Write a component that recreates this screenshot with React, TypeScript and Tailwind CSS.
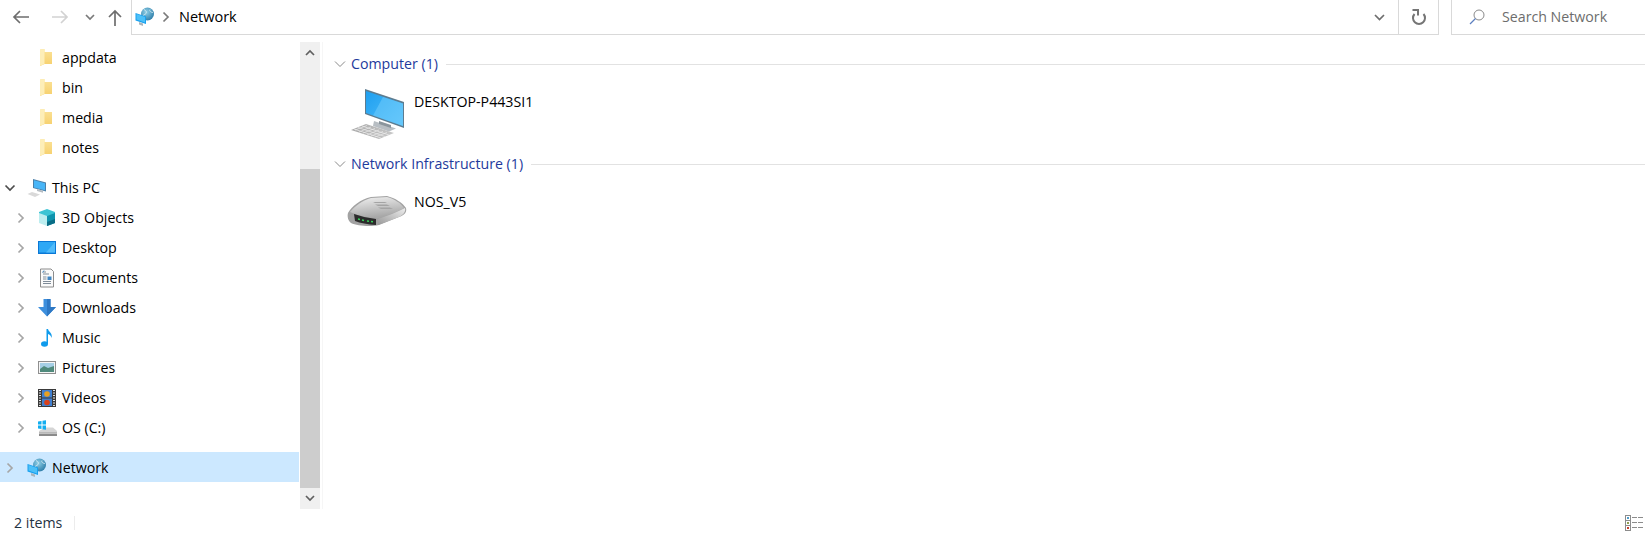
import type { ReactNode } from "react";

function Chevron({ open, color = "#a6a6a6" }: { open?: boolean; color?: string }) {
	return (
		<svg width="14" height="14" viewBox="0 0 14 14" fill="none" stroke={color} strokeWidth="1.7">
			{open ? <path d="M2.5 4.5 7 9l4.5-4.5" /> : <path d="M4.5 2.5 9 7l-4.5 4.5" />}
		</svg>
	);
}

function FolderIcon() {
	return (
		<svg width="20" height="20" viewBox="0 0 20 20">
			<defs>
				<linearGradient id="fold" x1="0" y1="0" x2="0" y2="1">
					<stop offset="0" stopColor="#fbe39a" />
					<stop offset="1" stopColor="#f6cf6b" />
				</linearGradient>
			</defs>
			<path d="M3 1.500 7.500 1v3H15v12H7.500l-4.500 2z" fill="url(#fold)" />
			<path d="M3 1.500 7.500 1v15l-4.500 2z" fill="#fdeeb8" />
		</svg>
	);
}

function CubeIcon() {
	return (
		<svg width="20" height="20" viewBox="0 0 20 20">
			<path d="M10 1l8 3v5l-8 3-8-3V4z" fill="#3cc4d4" />
			<path d="M2 5l8 3v10l-8-3z" fill="#bdeef0" />
			<path d="M18 5l-8 3v10l8-3z" fill="#0f93ad" />
			<path d="M18 11l-8 3v4l8-3z" fill="#0a6d86" />
		</svg>
	);
}

function DesktopIcon() {
	return (
		<svg width="20" height="20" viewBox="0 0 20 20">
			<rect x="1" y="3" width="18" height="13" fill="#0a78d6" />
			<rect x="2" y="4" width="16" height="10.500" fill="#2fa8f5" />
			<path d="M18 4v10.500H9z" fill="#52bcfa" />
		</svg>
	);
}

function DocumentIcon() {
	return (
		<svg width="20" height="20" viewBox="0 0 20 20">
			<path d="M3.500 1H14l2.500 2.500V19h-13z" fill="#fafafa" stroke="#8c8c8c" />
			<path d="M6 4h3M6 6h6M6 9h3.500M6 11h3.500M6 13.500h8M6 15.500h8" stroke="#7f8c99" />
			<rect x="10.500" y="8.500" width="4" height="3.500" fill="#3f86c4" />
			<path d="M5.500 4.500 7 2.500" stroke="#3f86c4" />
		</svg>
	);
}

function DownloadIcon() {
	return (
		<svg width="20" height="20" viewBox="0 0 20 20">
			<path d="M6.500 1h7v8H19l-9 9.500L1 9h5.500z" fill="#3d8fdd" />
			<path d="M10 1h3.500v8H19l-9 9.500z" fill="#2e78c4" />
		</svg>
	);
}

function MusicIcon() {
	return (
		<svg width="20" height="20" viewBox="0 0 20 20">
			<ellipse cx="7.500" cy="16" rx="3.500" ry="2.800" fill="#0f9bec" />
			<path d="M9.500 1h1.500c.5 3 5 4 3.500 9-.5-2.500-2-3.500-3.500-4v10H9.500z" fill="#0f9bec" />
		</svg>
	);
}

function PicturesIcon() {
	return (
		<svg width="20" height="20" viewBox="0 0 20 20">
			<rect x="1.500" y="3.500" width="17" height="12" fill="#f5f5f5" stroke="#8f8f8f" />
			<rect x="3" y="5" width="14" height="9" fill="#a5cfe6" />
			<path d="M3 11l4-3 4 2 6-2v6H3z" fill="#4f8a7c" />
		</svg>
	);
}

function VideosIcon() {
	return (
		<svg width="20" height="20" viewBox="0 0 20 20">
			<rect x="1" y="1" width="18" height="18" fill="#3a3a3a" />
			<path d="M2 2.500h2M2 5h2M2 7.500h2M2 10h2M2 12.500h2M2 15h2M2 17.500h2M16 2.500h2M16 5h2M16 7.500h2M16 10h2M16 12.500h2M16 15h2M16 17.500h2" stroke="#e5e5e5" />
			<rect x="5" y="2" width="10" height="7.500" fill="#3f7fd0" />
			<rect x="5" y="10.500" width="10" height="7.500" fill="#3f7fd0" />
			<circle cx="10" cy="6" r="2.800" fill="#e8a020" />
			<circle cx="10" cy="14.500" r="2.800" fill="#d8401c" />
		</svg>
	);
}

function DriveIcon() {
	return (
		<svg width="20" height="20" viewBox="0 0 20 20">
			<path d="M2 13 8 9.500h8l4 3.500v4H2z" fill="#d5d5d5" />
			<path d="M2 14.500h18V18H2z" fill="#8b8b8b" />
			<path d="M2 14.500h18V16H2z" fill="#c2c2c2" />
			<path d="M1 3.500 4.500 3v3.500H1zM5.500 2.800 9 2.300v4.200H5.500zM1 7.500h3.500V11L1 10.500zM5.500 7.500H9v4.200l-3.500-.5z" fill="#12aef0" />
		</svg>
	);
}

function NetworkIcon({ id }: { id: string }) {
	return (
		<svg width="20" height="20" viewBox="0 0 20 20">
			<defs>
				<radialGradient id={id} cx="0.4" cy="0.35" r="0.8">
					<stop offset="0" stopColor="#8fd0e8" />
					<stop offset="1" stopColor="#1d6f9e" />
				</radialGradient>
			</defs>
			<circle cx="12.500" cy="7" r="6.500" fill={`url(#${id})`} />
			<path d="M9 2.500c2 1 3 2.500 2 4s-3 1-3 2.500 2 2 3 3M15 2.500c-1 1.500 1 3 3 3" stroke="#d5eaf2" strokeWidth="0.9" fill="none" />
			<path d="M0.500 6 11 9.500V17L0.500 13.500z" fill="#18a0ee" />
			<path d="M1.500 7 10 10v5.500L1.500 12.500z" fill="#4cc0f8" />
			<path d="M4 15l4 1.500V19l-4-1.500z" fill="#a9b4bb" />
		</svg>
	);
}

function PcSmallIcon() {
	return (
		<svg width="20" height="20" viewBox="0 0 20 20">
			<path d="M6 1l13 3.500v9L6 10z" fill="#4a7fa8" />
			<path d="M7 2.200l11 3v7L7 9.400z" fill="#48b5f7" />
			<path d="M10 11l6 1.700v2L10 13z" fill="#b5bcc2" />
			<path d="M0.500 16 5 14l8 2.500L8 19z" fill="#d9d9d9" />
		</svg>
	);
}

function TreeRow({ label, icon, chevron }: { label: string; icon: ReactNode; chevron?: boolean }) {
	return (
		<div className="h-[30px] flex items-center pl-[14px]">
			<span className="w-[14px] flex justify-center">{chevron && <Chevron />}</span>
			<span className="ml-[9px] mr-[5px] w-5 h-5 flex">{icon}</span>
			<span>{label}</span>
		</div>
	);
}

function GroupHeader({ title }: { title: string }) {
	return (
		<div className="h-5 flex items-center">
			<span className="w-7 pl-[11px]">
				<svg width="12" height="8" viewBox="0 0 12 8" fill="none" stroke="#8a8a8a" strokeWidth="1">
					<path d="M1 1.500 6 6.500l5-5" />
				</svg>
			</span>
			<span className="text-[#1e3a9c]">{title}</span>
			<div className="ml-2 grow h-px mt-px bg-[#e2e2e2]" />
		</div>
	);
}

export default function App() {
	return (
		<div className="w-[1645px] h-[533px] overflow-hidden bg-white flex flex-col text-[14.2px] text-black font-['Open_Sans',sans-serif]">
			<div className="h-[42px] flex items-start shrink-0">
				<div className="w-[131px] h-[34px] flex items-center">
					<svg className="ml-[12px]" width="18" height="14" viewBox="0 0 18 14" fill="none" stroke="#6e6e6e" strokeWidth="1.7">
						<path d="M17 7H2M8 1 2 7l6 6" />
					</svg>
					<svg className="ml-[21px]" width="18" height="14" viewBox="0 0 18 14" fill="none" stroke="#d2d2d2" strokeWidth="1.7">
						<path d="M1 7h15M10 1l6 6-6 6" />
					</svg>
					<svg className="ml-[16px]" width="10" height="7" viewBox="0 0 10 7" fill="none" stroke="#7a7a7a" strokeWidth="1.7">
						<path d="M1 1l4 4 4-4" />
					</svg>
					<svg className="ml-[13px]" width="14" height="17" viewBox="0 0 14 17" fill="none" stroke="#6e6e6e" strokeWidth="1.7">
						<path d="M7 17V2M1 8l6-6 6 6" />
					</svg>
				</div>
				<div className="w-[308px] grow h-[35px] flex items-center border-l border-b border-r border-[#d9d9d9]">
					<span className="ml-[3px] w-5 h-5 flex"><NetworkIcon id="netTop" /></span>
					<span className="ml-[4px] w-[14px] flex"><Chevron color="#7a7a7a" /></span>
					<span className="ml-[6px] text-[14.5px]">Network</span>
					<span className="grow" />
					<svg className="mr-[13px]" width="11" height="7" viewBox="0 0 11 7" fill="none" stroke="#6e6e6e" strokeWidth="1.7">
						<path d="M1 1l4.500 4.500L10 1" />
					</svg>
					<div className="w-10 h-full border-l border-[#d9d9d9] flex items-center justify-center">
						<svg width="16" height="16" viewBox="0 0 16 16" fill="none" stroke="#757575" strokeWidth="2">
							<path d="M12.500 5A6 6 0 1 1 3.500 5M1.500 1H7V6.500" />
						</svg>
					</div>
				</div>
				<div className="ml-3 w-[194px] h-[35px] flex items-center border-l border-b border-[#d9d9d9]">
					<svg className="ml-[17px]" width="16" height="16" viewBox="0 0 16 16" fill="none">
						<circle cx="10" cy="6" r="5" stroke="#8a8a8a" strokeWidth="1" />
						<path d="M6.500 9.500 1 15" stroke="#5c7fc0" strokeWidth="1.200" />
					</svg>
					<span className="ml-[17px] text-[#6d6d6d]">Search Network</span>
				</div>
			</div>

			<div className="flex grow min-h-0">
				<div className="w-[300px] pt-px shrink-0">
					<TreeRow label="appdata" icon={<FolderIcon />} />
					<TreeRow label="bin" icon={<FolderIcon />} />
					<TreeRow label="media" icon={<FolderIcon />} />
					<TreeRow label="notes" icon={<FolderIcon />} />
					<div className="h-[30px] mt-[10px] flex items-center pl-[3px]">
						<span className="w-[14px] flex"><Chevron open color="#4d4d4d" /></span>
						<span className="ml-[10px] mr-[5px] w-5 h-5 flex"><PcSmallIcon /></span>
						<span>This PC</span>
					</div>
					<TreeRow chevron label="3D Objects" icon={<CubeIcon />} />
					<TreeRow chevron label="Desktop" icon={<DesktopIcon />} />
					<TreeRow chevron label="Documents" icon={<DocumentIcon />} />
					<TreeRow chevron label="Downloads" icon={<DownloadIcon />} />
					<TreeRow chevron label="Music" icon={<MusicIcon />} />
					<TreeRow chevron label="Pictures" icon={<PicturesIcon />} />
					<TreeRow chevron label="Videos" icon={<VideosIcon />} />
					<TreeRow chevron label="OS (C:)" icon={<DriveIcon />} />
					<div className="h-[30px] mt-[9px] pt-0.5 flex items-center pl-[3px] bg-[#cce8ff] w-[299px]">
						<span className="w-[14px] flex"><Chevron /></span>
						<span className="ml-[10px] mr-[5px] w-5 h-5 flex"><NetworkIcon id="netTree" /></span>
						<span>Network</span>
					</div>
				</div>

				<div className="w-5 shrink-0 bg-[#f0f0f0] flex flex-col">
					<div className="h-5 flex items-center justify-center">
						<svg width="10" height="7" viewBox="0 0 10 7" fill="none" stroke="#606060" strokeWidth="1.7">
							<path d="M1 6l4-4 4 4" />
						</svg>
					</div>
					<div className="h-[107px]" />
					<div className="grow bg-[#cdcdcd]" />
					<div className="h-[21px] flex items-center justify-center">
						<svg width="10" height="7" viewBox="0 0 10 7" fill="none" stroke="#606060" strokeWidth="1.7">
							<path d="M1 1l4 4 4-4" />
						</svg>
					</div>
				</div>

				<div className="ml-[2px] grow border-l border-[#f6f6f6] pt-3">
					<GroupHeader title="Computer (1)" />
					<div className="h-20 flex pl-[26px] pt-[11px]">
						<svg width="56" height="56" viewBox="0 0 56 56">
							<defs>
								<linearGradient id="scr" x1="0" y1="0" x2="1" y2="1">
									<stop offset="0" stopColor="#1e9ff0" />
									<stop offset="1" stopColor="#55c0fa" />
								</linearGradient>
								<linearGradient id="keys" x1="0" y1="0" x2="1" y2="0">
									<stop offset="0" stopColor="#a8a8a8" />
									<stop offset="1" stopColor="#c8c8c8" />
								</linearGradient>
							</defs>
							<path d="M16 4 55 17v26L16 29z" fill="#5d7c90" />
							<path d="M17 6 54 18.500v22.500L17 28z" fill="url(#scr)" />
							<path d="M34 12 54 18.500v22.500L24 30.500z" fill="#7cd2fc" opacity="0.45" />
							<path d="M25 36 47 43.500 40 46.500 24 41z" fill="#b8bec3" />
							<path d="M30 36 42 40v3L30 39z" fill="#8b959c" />
							<path d="M2 45 17 39 45 48 30 54z" fill="url(#keys)" />
							<path d="M6 45 18 40.500M10 47 22 42M14 48 26 43.500M18 50 30 45M22 51 34 46.500M26 52 38 47.500" stroke="#ececec" strokeWidth="0.7" />
							<path d="M5 44 32 53M9 42.500 36 51.500M13 41 40 50" stroke="#ececec" strokeWidth="0.7" />
						</svg>
						<span className="ml-[9px] mt-[6px]">DESKTOP-P443SI1</span>
					</div>
					<GroupHeader title="Network Infrastructure (1)" />
					<div className="h-20 flex pl-[24px] pt-[11px]">
						<svg className="mt-[8px]" width="60" height="36" viewBox="0 0 60 36">
							<defs>
								<linearGradient id="rtr" x1="0" y1="0" x2="0.3" y2="1">
									<stop offset="0" stopColor="#f2f2f2" />
									<stop offset="1" stopColor="#a8a8a8" />
								</linearGradient>
								<linearGradient id="rside" x1="0" y1="1" x2="1" y2="0">
									<stop offset="0" stopColor="#9a9a9a" />
									<stop offset="1" stopColor="#ececec" />
								</linearGradient>
							</defs>
							<path d="M1 20C4 14 14 6 24 4L40 3C48 5 56 10 59 15 60 19 58 22 52 24L32 32C24 34 10 33 4 30 1 28 0 23 1 20z" fill="#a2a2a2" />
							<path d="M3 19C8 13 16 7 24 5L40 4C47 6 54 10 57 15 50 19 40 23 31 25 22 25 12 23 3 19z" fill="url(#rtr)" />
							<path d="M26 9h12l2 1H28zM28 11.500h12l3 1.500H31zM31 14.500h12l3 1.500H34z" fill="#a4a4a4" />
							<path d="M7 21Q18 25 29 26L29 32Q16 31 8 28z" fill="#2b2b2b" />
							<path d="M11 26l2 .4M15 27l2 .4M20 28l2 .3M24 28.500l2 .2" stroke="#37d05a" strokeWidth="1.500" />
							<path d="M31 26C40 23 50 19 58 15 59 19 56 22 52 24L31 32z" fill="url(#rside)" />
						</svg>
						<span className="ml-[7px] mt-[6px]">NOS_V5</span>
					</div>
				</div>
			</div>

			<div className="h-6 shrink-0 flex items-center pl-[14px] pt-1 text-[#1f3342]">
				<span className="w-[60px]">2 items</span>
				<div className="h-[14px] w-px bg-[#ececec]" />
				<span className="grow" />
				<svg className="mr-[2px]" width="18" height="16" viewBox="0 0 18 16" fill="none">
					<rect x="0.500" y="0.500" width="5" height="15" stroke="#8c8c8c" />
					<path d="M0 5.500h6M0 10.500h6" stroke="#8c8c8c" />
					<rect x="2" y="2" width="2" height="2" fill="#4f9cc9" />
					<rect x="2" y="7" width="2" height="2" fill="#8f9f4f" />
					<rect x="2" y="12" width="2" height="2" fill="#c8402c" />
					<path d="M7 2.500h5M13 2.500h5M7 7.500h5M13 7.500h5M7 12.500h5M13 12.500h5" stroke="#8c8c8c" />
				</svg>
			</div>
		</div>
	);
}
